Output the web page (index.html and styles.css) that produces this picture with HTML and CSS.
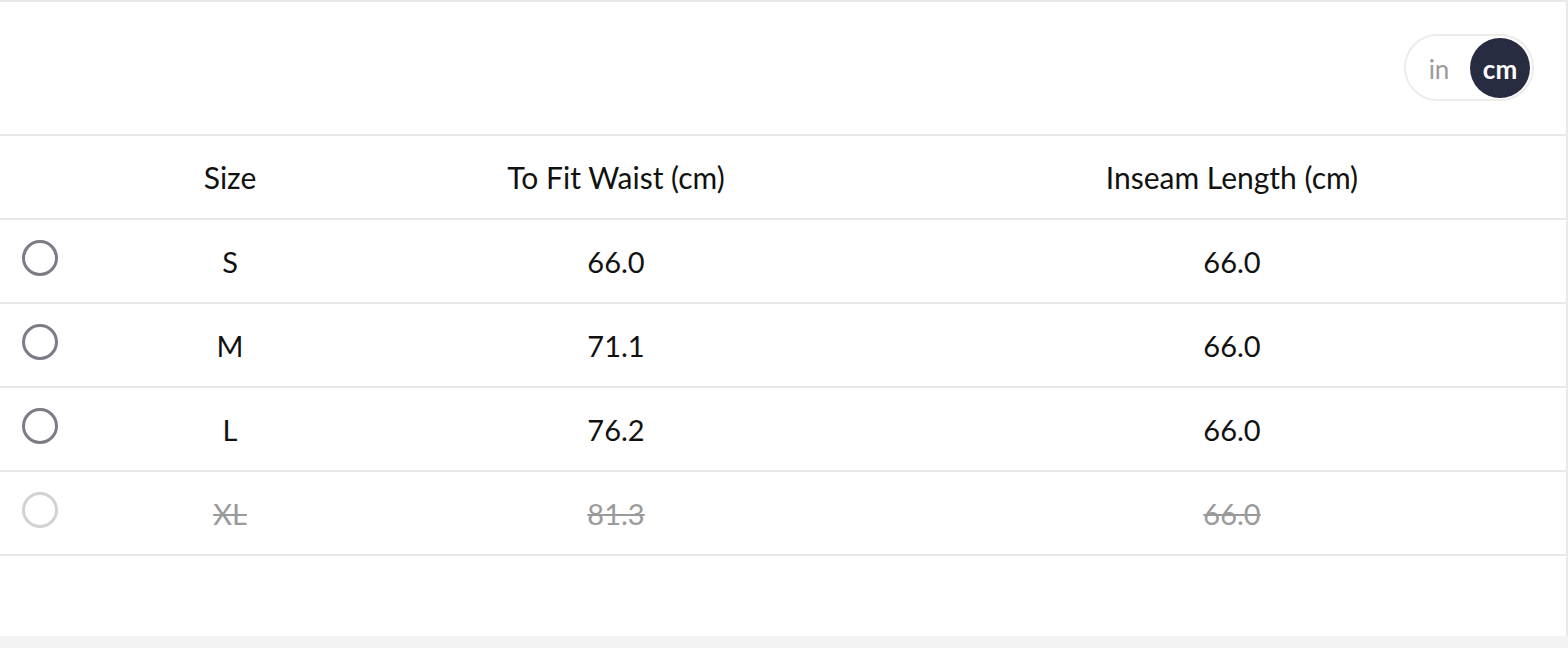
FILE: index.html
```html
<!DOCTYPE html>
<html>
<head>
<meta charset="utf-8">
<link rel="stylesheet" href="styles.css">
</head>
<body>
<div class="panel">
  <div class="toolbar">
    <div class="unit-toggle">
      <span class="unit">in</span>
      <span class="unit active">cm</span>
    </div>
  </div>
  <div class="table">
    <div class="row head">
      <div class="cell"></div>
      <div class="cell">Size</div>
      <div class="cell">To Fit Waist (cm)</div>
      <div class="cell">Inseam Length (cm)</div>
    </div>
    <div class="row">
      <div class="cell radio-cell"><span class="radio"></span></div>
      <div class="cell">S</div>
      <div class="cell">66.0</div>
      <div class="cell">66.0</div>
    </div>
    <div class="row">
      <div class="cell radio-cell"><span class="radio"></span></div>
      <div class="cell">M</div>
      <div class="cell">71.1</div>
      <div class="cell">66.0</div>
    </div>
    <div class="row">
      <div class="cell radio-cell"><span class="radio"></span></div>
      <div class="cell">L</div>
      <div class="cell">76.2</div>
      <div class="cell">66.0</div>
    </div>
    <div class="row disabled">
      <div class="cell radio-cell"><span class="radio"></span></div>
      <div class="cell">XL</div>
      <div class="cell">81.3</div>
      <div class="cell">66.0</div>
    </div>
  </div>
</div>
</body>
</html>
```
FILE: styles.css
```css
html, body {
  margin: 0;
  padding: 0;
}
body {
  background: #f3f3f3;
  font-family: "Lato", "Source Sans Pro", "Liberation Sans", sans-serif;
  color: #111;
}
.panel {
  width: 1566px;
  height: 634px;
  background: #fff;
  border-top: 2px solid #e9e9e9;
  border-right: 2px solid #e9e9e9;
}
.toolbar {
  height: 132px;
  display: flex;
  justify-content: flex-end;
  align-items: flex-start;
  padding-right: 32px;
  box-sizing: border-box;
  padding-top: 32px;
}
.unit-toggle {
  width: 130px;
  height: 67px;
  box-sizing: border-box;
  border: 2px solid #ececec;
  border-radius: 34px;
  display: flex;
  align-items: center;
  justify-content: space-between;
  padding: 0 2px 0 2px;
}
.unit {
  width: 62px;
  height: 60px;
  display: flex;
  align-items: center;
  justify-content: center;
  font-size: 26px;
  color: #9a9a9a;
  box-sizing: border-box;
  padding-top: 3px;
}
.unit.active {
  background: #272c40;
  color: #fff;
  font-weight: 700;
  border-radius: 50%;
  width: 60px;
}
.table {
  border-top: 2px solid #e9e9e9;
}
.row {
  display: grid;
  grid-template-columns: 126px 208px 564px 1fr;
  height: 82px;
  border-bottom: 2px solid #e9e9e9;
  align-items: center;
  font-size: 29px;
}
.row.head {
  font-size: 30px;
}
.cell {
  text-align: center;
}
.radio-cell {
  display: flex;
  justify-content: flex-start;
  padding-left: 22px;
  align-self: start;
  padding-top: 20px;
}
.radio {
  display: block;
  width: 36px;
  height: 36px;
  box-sizing: border-box;
  border: 3px solid #7c7b86;
  border-radius: 50%;
}
.row.disabled .cell {
  color: #9a9a9a;
  text-decoration: line-through;
  text-decoration-thickness: 2px;
}
.row.disabled .radio {
  border-color: #d2d2d4;
}
```
